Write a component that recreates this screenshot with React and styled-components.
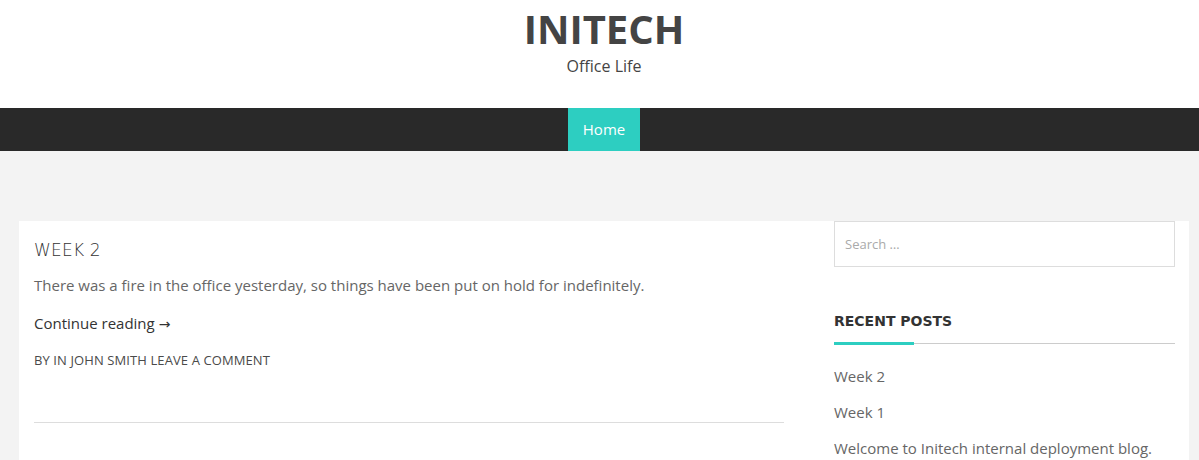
import React from 'react';
import styled, { createGlobalStyle } from 'styled-components';

const GlobalStyle = createGlobalStyle`
    body {
        margin: 0;
        background: #f3f3f3;
        font-family: 'Open Sans', 'Liberation Sans', sans-serif;
        color: #444;
    }
    * { box-sizing: border-box; }
`;

const Header = styled.header`
    background: #fff;
    height: 108px;
    text-align: center;
    padding: 4px 0 0 9px;
`;

const SiteTitle = styled.h1`
    margin: 0;
    font-size: 40px;
    line-height: 50px;
    font-weight: 700;
    color: #444;
`;

const Tagline = styled.p`
    margin: 1px 0 0;
    font-size: 16px;
    line-height: 22px;
    color: #444;
`;

const NavBar = styled.nav`
    background: #292929;
    height: 43px;
    display: flex;
    justify-content: center;
    padding-left: 9px;
`;

const NavItem = styled.a`
    display: flex;
    align-items: center;
    padding: 0 15px 1px;
    font-size: 15px;
    color: #fff;
    text-decoration: none;
    background: ${(p) => (p.$active ? '#2dcec1' : 'transparent')};
`;

const Container = styled.div`
    width: 1170px;
    margin: 70px 0 0 19px;
    background: #fff;
    display: grid;
    grid-template-columns: 780px 390px;
`;

const Main = styled.main`
    padding: 0 15px;
`;

const Post = styled.article`
    padding: 17px 0 50px;
    border-bottom: 1px solid #ddd;
`;

const PostTitle = styled.h2`
    margin: 0 0 11px;
    font-family: 'DejaVu Sans', sans-serif;
    font-weight: 300;
    font-size: 17px;
    line-height: 24px;
    color: #333;
    text-transform: uppercase;
    letter-spacing: 0.2px;
`;

const Excerpt = styled.p`
    margin: 0 0 14px;
    font-size: 15px;
    line-height: 24px;
    color: #666;
`;

const ReadMore = styled.a`
    display: block;
    font-size: 15px;
    line-height: 24px;
    color: #333;
    text-decoration: none;
    margin-bottom: 12px;
`;

const Arrow = styled.span`
    font-family: 'DejaVu Sans', sans-serif;
    font-size: 14px;
`;

const Meta = styled.div`
    font-size: 13px;
    line-height: 24px;
    text-transform: uppercase;
    color: #4a4a4a;
    letter-spacing: 0.1px;
`;

const Sidebar = styled.aside`
    padding: 0 14px 0 35px;
`;

const SearchInput = styled.input`
    width: 100%;
    height: 46px;
    border: 1px solid #ddd;
    padding: 0 10px;
    font-family: 'Open Sans', 'Liberation Sans', sans-serif;
    font-size: 13px;
    color: #444;
    outline: none;
    &::placeholder { color: #aaa; }
`;

const WidgetTitle = styled.h3`
    margin: 44px 0 0;
    padding-bottom: 12px;
    font-family: 'DejaVu Sans', sans-serif;
    font-weight: 700;
    font-size: 14px;
    line-height: 20px;
    color: #333;
    text-transform: uppercase;
    border-bottom: 1px solid #ccc;
    position: relative;
    &::after {
        content: '';
        position: absolute;
        left: 0;
        bottom: -2px;
        width: 80px;
        height: 3px;
        background: #2dcec1;
    }
`;

const PostList = styled.ul`
    list-style: none;
    margin: 20px 0 0;
    padding: 0;
`;

const PostLink = styled.li`
    font-size: 15px;
    line-height: 24px;
    color: #666;
    margin-bottom: 12px;
`;

function App() {
    const recent = ['Week 2', 'Week 1', 'Welcome to Initech internal deployment blog.'];

    return (
        <>
            <GlobalStyle />
            <Header>
                <SiteTitle>INITECH</SiteTitle>
                <Tagline>Office Life</Tagline>
            </Header>
            <NavBar>
                <NavItem $active href="#">Home</NavItem>
            </NavBar>
            <Container>
                <Main>
                    <Post>
                        <PostTitle>Week 2</PostTitle>
                        <Excerpt>There was a fire in the office yesterday, so things have been put on hold for indefinitely.</Excerpt>
                        <ReadMore href="#">Continue reading <Arrow>→</Arrow></ReadMore>
                        <Meta>By in John Smith Leave a comment</Meta>
                    </Post>
                </Main>
                <Sidebar>
                    <SearchInput placeholder="Search …" />
                    <WidgetTitle>Recent Posts</WidgetTitle>
                    <PostList>
                        {recent.map((title) => (
                            <PostLink key={title}>{title}</PostLink>
                        ))}
                    </PostList>
                </Sidebar>
            </Container>
        </>
    );
}

export default App;
